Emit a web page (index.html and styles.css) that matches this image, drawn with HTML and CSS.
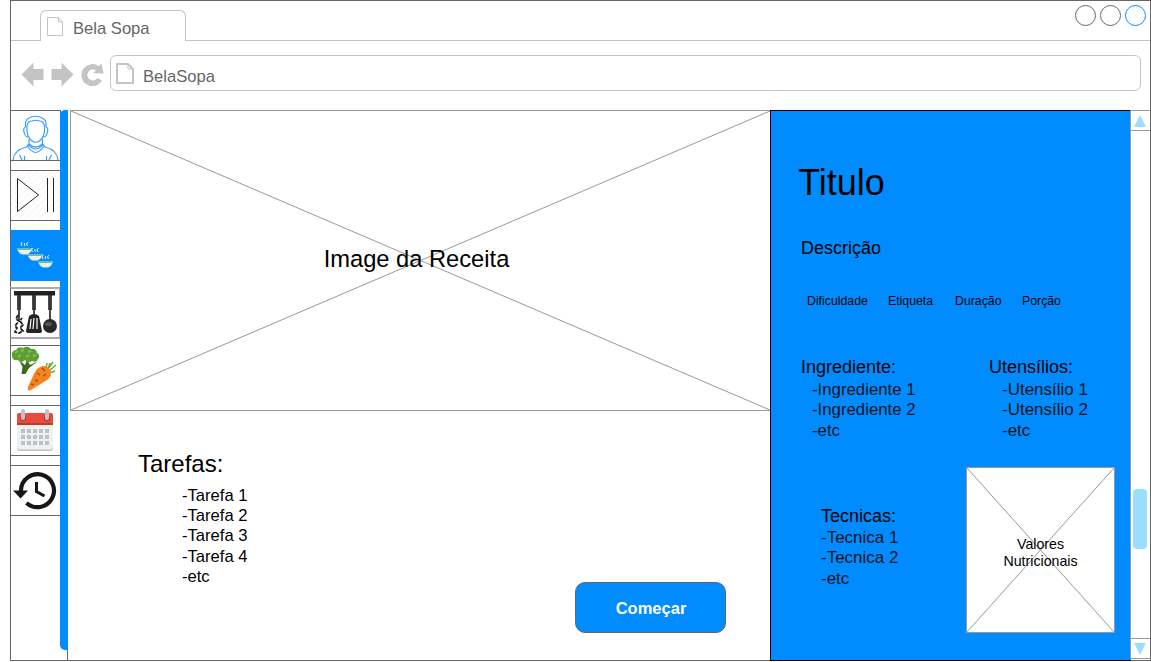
FILE: index.html
```html
<!DOCTYPE html>
<html lang="pt">
<head>
<meta charset="utf-8">
<title>Bela Sopa</title>
<link rel="stylesheet" href="styles.css">
</head>
<body>
<div class="window">
  <header class="tabs">
    <div class="tab-lead"></div>
    <div class="tab">
      <svg class="tab-icon" width="17" height="20" viewBox="0 0 17 20"><path d="M.5 1.500H11.500L15.500 6V19.500H.5ZM11.500 1.500V6H15.500" fill="none" stroke="#c4c4c4"/></svg>
      <span>Bela Sopa</span>
    </div>
    <div class="tab-rest">
      <i class="dot"></i><i class="dot"></i><i class="dot dot-blue"></i>
    </div>
  </header>
  <div class="toolbar">
    <svg class="nav" width="84" height="26" viewBox="0 0 84 26" fill="#c4c4c4">
      <path d="M.5 13.500L12.500 1.500V8H22.500V19H12.500V25.500Z"/>
      <path d="M52.500 13.500L40.500 1.500V8H30.500V19H40.500V25.500Z"/>
      <path d="M77.500 5.500L80.500 2.500L82.500 12.500L72 12L75 9.500A5.500 5.500 0 1 0 76.500 17L81 19.500A11 11 0 1 1 77.500 5Z"/>
    </svg>
    <div class="address">
      <svg width="18" height="21" viewBox="0 0 18 21"><path d="M1 1H12L17 6V20H1Z" fill="none" stroke="#c4c4c4" stroke-width="2"/><path d="M12 1V6H17" fill="none" stroke="#c4c4c4"/></svg>
      <span>BelaSopa</span>
    </div>
  </div>
  <div class="body">
    <nav class="sidebar">
      <div class="item profile">
        <svg width="49" height="49" viewBox="0 0 49 49" fill="none" stroke="#3a9df8" stroke-width="1.200">
          <path d="M14.500 16V12Q15 8 19 6.500Q24.500 4 30 6.500Q34.500 8 35 12V16M16 15Q17 10 21 10Q24.500 8.500 28.500 10Q32.500 10 33.500 15V20Q33 26 29 29.500Q24.500 33 20.500 29.500Q16.500 26 16 20ZM14.500 16Q12 17 13 21Q14 26 17 26M35 16Q37.500 17 36.500 21Q35.500 26 32.500 26"/>
          <path d="M18 28V33Q24.500 39 31.500 33V28M17 33Q24.500 43 32.500 33M16.500 35Q24.500 48 33 35M18 33L15.500 36Q3 39 2 49M31.500 33L34 36Q46 39 47 49M8.500 44L11 49M13.500 45V49M35.500 45V49M40.500 44L38 49"/>
        </svg>
      </div>
      <div class="item play">
        <svg width="49" height="49" viewBox="0 0 49 49" fill="none" stroke="#222"><path d="M6.500 7.500V40.500L27.500 24Z"/><path d="M36.500 7V41M42.500 7V41"/></svg>
      </div>
      <div class="item bowls">
        <svg width="49" height="50" viewBox="0 0 49 50">
          <defs>
            <g id="bowl"><path d="M0 0H15Q14 5 10 6.500H5Q1 5 0 0Z" fill="#eef0ee"/><path d="M0 0H15L14.500 2H.5Z" fill="#66bfa5"/><path d="M5 -2L4 -4L5 -6M8 -2L7 -4L8 -5M10.500 -2L9.500 -4L11 -6" fill="none" stroke="#e5f2ff"/></g>
          </defs>
          <use href="#bowl" x="6" y="17"/><use href="#bowl" x="16.500" y="23"/><use href="#bowl" x="27" y="30"/>
        </svg>
      </div>
      <div class="item tools">
        <svg width="49" height="49" viewBox="0 0 49 49">
          <path d="M3 2H44V6.500H3Z" fill="#202224"/><circle cx="8" cy="5.500" r="2" fill="#222"/><circle cx="23" cy="5.500" r="2" fill="#222"/><circle cx="39" cy="5.500" r="2" fill="#222"/>
          <path d="M8 6V21M23 6V21M39 6V21" stroke="#35383a" stroke-width="3.800"/>
          <path d="M8 21V31M23 21V28M39 21V32" stroke="#111" stroke-width="1.500"/>
          <path d="M7 26L5 30L8 32L4 37L6 39L4 43L8 44L12 42L9 39L12 36L9 32L11 29" fill="none" stroke="#222" stroke-width="1.800" stroke-dasharray="4 1"/>
          <path d="M18 27Q23 23 28 27L31 42Q31 44 29 44H17Q15 44 15 42Z" fill="#222426"/>
          <path d="M20 30L19 40M23 29L22 40M26 29V40" stroke="#fff" stroke-width="1.200"/>
          <circle cx="39" cy="37" r="7" fill="#27292b"/><ellipse cx="37.500" cy="35" rx="3.500" ry="2" fill="#54575a"/>
        </svg>
      </div>
      <div class="item veg">
        <svg width="49" height="49" viewBox="0 0 49 49">
          <path d="M8 14L14 19L16 14L19 19L27 15L18 22L14.500 28H10.500L11.500 21Z" fill="#3c6b1c"/>
          <path d="M1 10Q0 5 5 4Q7 0 12 2Q17-1 20 3Q25 2 26 7Q30 9 27 13Q26 17 21 15Q17 18 14 14Q10 18 7 14Q1 15 1 10Z" fill="#5e9f35"/>
          <path d="M4 7L7 5M10 5L13 4M17 6L20 5M7 11L10 9M15 11L18 9M22 10L25 9" stroke="#87bd55" stroke-width="2"/>
          <path d="M35 23L36 17M37 23L42 16M38 25L45 19M38 27L44 25M37 23L39 17" stroke="#69a945" stroke-width="1.500"/>
          <path d="M29 21Q36 18 39 24Q42 30 36 34L20 44Q16 46 17 41L23 28Q25 23 29 21Z" fill="#f7831c"/>
          <path d="M31 22L34 25M26 27L29 29M35 28L32 30M24 34L27 35M20 38L23 39" stroke="#a65012" stroke-width="1.500"/>
        </svg>
      </div>
      <div class="item calendar">
        <svg width="49" height="49" viewBox="0 0 49 49">
          <path d="M6 18H42V42Q42 45 39 45H9Q6 45 6 42Z" fill="#edf1f2"/><path d="M6 41Q6 45 9 45H39Q42 45 42 41Q41 43.500 39 43.500H9Q7 43.500 6 41Z" fill="#bdc3c7"/>
          <path d="M6 19V9Q6 7 8 7H40Q42 7 42 9V19Z" fill="#e84b3c"/><path d="M6 17H42V19H6Z" fill="#c13a2c"/>
          <circle cx="12" cy="12" r="3" fill="#b9382b"/><circle cx="36" cy="12" r="3" fill="#b9382b"/>
          <path d="M12 5V12M36 5V12" stroke="#bdc3c7" stroke-width="4" stroke-linecap="round"/>
          <path d="M10 25H39M10 31H39M10 37H39" stroke="#bcc1c5" stroke-width="4" stroke-dasharray="4 2"/>
        </svg>
      </div>
      <div class="item history">
        <svg width="49" height="49" viewBox="0 0 49 49"><path d="M10 26V24A16.500 16.500 0 1 1 15.500 37" fill="none" stroke="#17171a" stroke-width="4.200"/><path d="M2 24.500H17L9.500 32.500Z" fill="#17171a"/><path d="M25.500 16V25.500L33.500 30" fill="none" stroke="#17171a" stroke-width="3"/></svg>
      </div>
    </nav>
    <div class="rail"><div class="rail-bar"></div></div>
    <main class="main">
      <div class="hero">
        <svg class="cross" viewBox="0 0 700 300" preserveAspectRatio="none"><path d="M0 0L700 300M700 0L0 300" stroke="#999"/></svg>
        <span class="hero-label">Image da Receita</span>
      </div>
      <div class="steps">
        <section class="tasks">
          <h2>Tarefas:</h2>
          <ul><li>-Tarefa 1</li><li>-Tarefa 2</li><li>-Tarefa 3</li><li>-Tarefa 4</li><li>-etc</li></ul>
        </section>
        <button class="start">Começar</button>
      </div>
    </main>
    <aside class="details">
      <h1>Titulo</h1>
      <p class="desc">Descrição</p>
      <div class="meta"><span>Dificuldade</span><span>Etiqueta</span><span>Duração</span><span>Porção</span></div>
      <div class="lists">
        <section><h3>Ingrediente:</h3><ul><li>-Ingrediente 1</li><li>-Ingrediente 2</li><li>-etc</li></ul></section>
        <section class="utensils"><h3>Utensílios:</h3><ul><li>-Utensílio 1</li><li>-Utensílio 2</li><li>-etc</li></ul></section>
      </div>
      <div class="lower">
        <section class="techniques"><h3>Tecnicas:</h3><ul><li>-Tecnica 1</li><li>-Tecnica 2</li><li>-etc</li></ul></section>
        <div class="values">
          <svg class="cross" viewBox="0 0 147 164" preserveAspectRatio="none"><path d="M0 0L147 164M147 0L0 164" stroke="#999"/></svg>
          <span class="values-label">Valores<br>Nutricionais</span>
        </div>
      </div>
    </aside>
    <div class="scrollbar">
      <div class="arrow"><svg width="12" height="12" viewBox="0 0 12 12"><path d="M6 0L12 12H0Z" fill="#99ddff"/></svg></div>
      <div class="track"><div class="thumb"></div></div>
      <div class="arrow arrow-down"><svg width="12" height="12" viewBox="0 0 12 12"><path d="M0 0H12L6 12Z" fill="#99ddff"/></svg></div>
    </div>
  </div>
</div>
</body>
</html>
```
FILE: styles.css
```css
* { box-sizing: border-box; margin: 0; padding: 0; }
body { background: #fff; overflow: hidden; font-family: "Liberation Sans", Arial, sans-serif; font-size: 16.600px; color: #000; }
ul { list-style: none; }
svg { display: block; }
h1, h2, h3 { font-weight: normal; }

.window { width: 1141px; height: 661px; margin-left: 10px; border: 1px solid #666; display: flex; flex-direction: column; }

.tabs { height: 40px; flex: none; display: flex; color: #666; }
.tab-lead { width: 29px; border-bottom: 1px solid #c4c4c4; }
.tab { width: 146px; margin-top: 9px; border: 1px solid #c4c4c4; border-bottom: 0; border-radius: 6px 6px 0 0; display: flex; gap: 9px; padding: 5px 0 0 6px; line-height: 26px; }
.tab-rest { flex: 1; border-bottom: 1px solid #c4c4c4; display: flex; justify-content: flex-end; gap: 4px; padding: 4px 4px 0 0; }
.dot { width: 21px; height: 21px; border: 1px solid #666; border-radius: 50%; }
.dot-blue { border-color: #008cff; }

.toolbar { height: 69px; flex: none; display: flex; padding: 14px 9px 0 10px; }
.nav { margin-top: 6px; }
.address { flex: 1; height: 36px; margin-left: 5px; border: 1px solid #c4c4c4; border-radius: 6px; display: flex; align-items: center; gap: 9px; padding-left: 5px; color: #666; }
.address span { padding-top: 7px; }

.body { flex: 1; min-height: 0; display: flex; margin: 0 -1px -1px; }

.sidebar { width: 50px; flex: none; display: flex; flex-direction: column; }
.item { width: 51px; height: 51px; margin-bottom: 9px; border: 1px solid #666; flex: none; }
.play { background: repeating-linear-gradient(135deg, #fff 0 3px, #f9f9f9 3px 5px); }
.bowls { background: #008cff; border-color: #008cff; border-left-color: #666; margin-bottom: 6px; }
.tools { height: 52px; border: 2px solid #aaa; border-left: 1px solid #666; margin-bottom: 6px; }

.rail { width: 10px; flex: none; z-index: 1; }
.rail::after { content: ""; display: block; width: 1px; height: 10px; margin-left: 7px; background: #666; }
.rail-bar { width: 8px; height: 540px; background: #008cff; border-radius: 5px 0 0 5px; }

.main { width: 700px; flex: none; display: flex; flex-direction: column; }
.hero { width: 701px; height: 301px; flex: none; border: 1px solid #999; display: grid; place-items: center; }
.cross { grid-area: 1 / 1; width: 100%; height: 100%; }
.hero-label { grid-area: 1 / 1; font-size: 23.700px; padding: 0 8px 2px 0; }
.steps { flex: 1; min-height: 0; display: flex; justify-content: space-between; align-items: flex-start; }
.tasks { padding: 39px 0 0 68px; }
.tasks h2 { font-size: 24px; line-height: 28px; }
.tasks ul { padding: 7.800px 0 0 44px; line-height: 20.330px; }
.start { width: 151px; height: 51px; margin: 171px 44px 0 0; border: 1px solid #666; border-radius: 10px; background: #008cff; color: #fff; font: bold 16.500px "Liberation Sans", Arial, sans-serif; padding: 2px 0 0 1px; }

.details { width: 361px; flex: none; z-index: 1; background: #008cff; border: 1px solid #000; border-right: 0; padding-top: 52px; display: flex; flex-direction: column; }
.details h1 { font-size: 36px; line-height: 40px; margin-left: 27px; }
.details h3, .desc { font-size: 18px; line-height: 20px; }
.desc { margin: 35px 0 0 30px; }
.meta { display: grid; grid-template-columns: 81px 67px 67px auto; margin: 36px 0 0 36px; font-size: 12.300px; line-height: 14px; }
.lists { display: grid; grid-template-columns: 188px auto; margin: 49px 0 0 30px; }
.details ul { font-size: 16.800px; line-height: 20.330px; padding: 2.900px 0 0 11px; color: #0d1318; }
.details .utensils ul { padding-left: 13px; font-size: 17px; }
.lower { display: flex; margin-top: 26.100px; }
.techniques { width: 195px; padding: 39px 0 0 50px; }
.details .techniques ul { padding: 2px 0 0 0; font-size: 17px; }
.values { width: 149px; height: 166px; background: #fff; border: 1px solid #999; display: grid; place-items: center; }
.values-label { grid-area: 1 / 1; text-align: center; font-size: 14.200px; line-height: 17px; padding-top: 7px; }

.scrollbar { width: 21px; flex: none; z-index: 2; margin-bottom: 2px; border: 1px solid #999; border-right-color: #666; display: flex; flex-direction: column; background: #fff; margin-left: -1px; }
.arrow { height: 20px; flex: none; display: grid; place-items: center; padding-right: 1px; border-bottom: 1px solid #999; }
.arrow-down { border-bottom: 0; border-top: 1px solid #999; }
.track { flex: 1; padding: 358px 2px 0 2px; }
.thumb { width: 14px; height: 60px; border-radius: 4px; background: #99ddff; }
```
